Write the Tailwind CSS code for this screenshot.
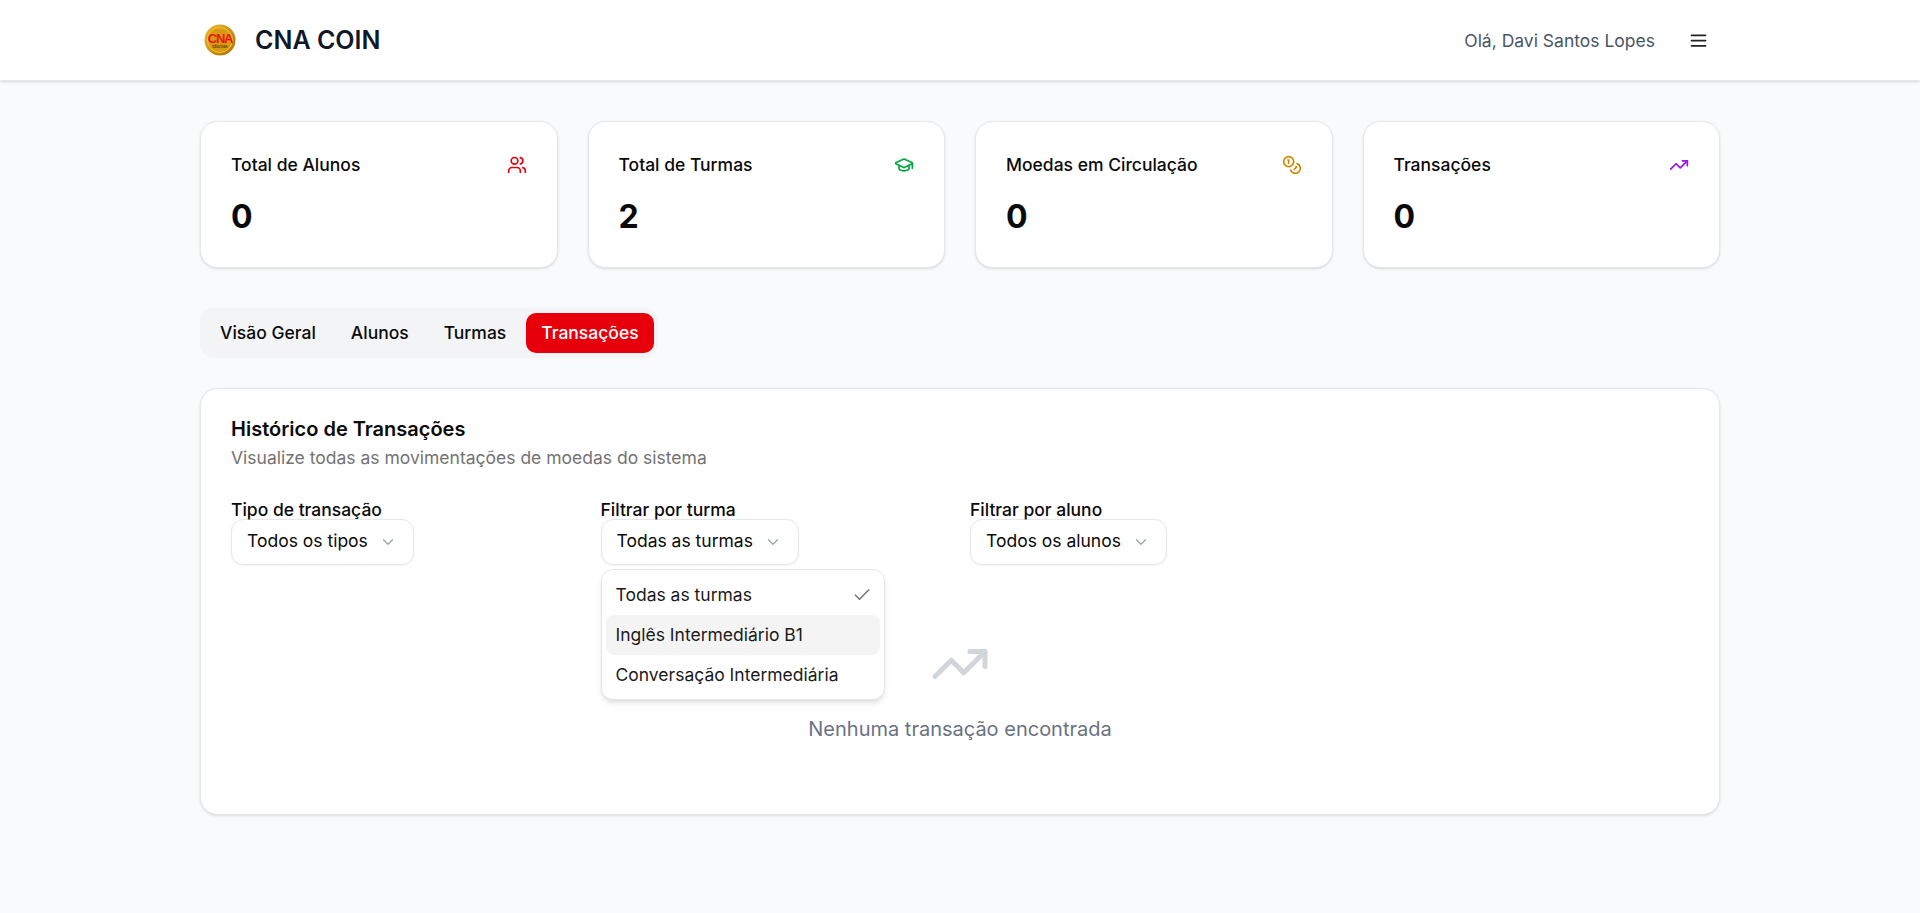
<!DOCTYPE html>
<html lang="pt-BR">
<head>
    <meta charset="UTF-8">
    <meta name="viewport" content="width=device-width, initial-scale=1.0">
    <title>CNA COIN</title>
    <script src="https://cdn.jsdelivr.net/npm/@tailwindcss/browser@4"></script>
</head>
<body class="bg-[#f9fafb] font-['Inter',sans-serif] text-[#0a0a0a] min-h-[913px]">
    <!-- Header -->
    <header class="bg-white h-[81px] border-b border-gray-200 shadow-sm">
        <div class="w-[1520px] mx-auto h-full flex items-center justify-between pl-1 pr-[11px]">
            <div class="flex items-center gap-[19px]">
                <svg class="w-8 h-8" viewBox="0 0 32 32">
                    <defs>
                        <linearGradient id="gold" x1="0" y1="0" x2="1" y2="1">
                            <stop offset="0" stop-color="#f0bd28"/>
                            <stop offset="1" stop-color="#a86c06"/>
                        </linearGradient>
                    </defs>
                    <circle cx="16" cy="16" r="15.5" fill="url(#gold)"/>
                    <circle cx="16" cy="16" r="12.5" fill="#d99a10" stroke="#f5cf4a" stroke-width="0.8"/>
                    <text x="16" y="19" text-anchor="middle" font-family="Liberation Sans" font-size="13" font-weight="700" letter-spacing="-1.2" fill="#e8141c">CNA</text>
                    <text x="16" y="24" text-anchor="middle" font-family="Liberation Sans" font-size="4.5" fill="#3a2a08">idiomas</text>
                </svg>
                <span class="text-[25px] font-semibold text-gray-900 pt-0.5">CNA COIN</span>
            </div>
            <div class="flex items-center gap-[33px]">
                <span class="text-[17.5px] text-gray-600 pt-0.5">Olá, Davi Santos Lopes</span>
                <svg class="w-[21px] h-[21px] text-[#222222]" viewBox="0 0 24 24" fill="none" stroke="currentColor" stroke-width="2" stroke-linecap="round" stroke-linejoin="round">
                    <path d="M4 6h16"/><path d="M4 12h16"/><path d="M4 18h16"/>
                </svg>
            </div>
        </div>
    </header>

    <main class="w-[1520px] mx-auto pt-10">
        <!-- Stats -->
        <div class="grid grid-cols-4 gap-[30px]">
            <div class="h-[147px] bg-white rounded-[17.5px] border border-gray-200 shadow-sm px-[30px] pt-[31px]">
                <div class="flex items-center justify-between h-6">
                    <span class="text-[17.5px] font-medium">Total de Alunos</span>
                    <svg class="w-5 h-5 text-[#e7000b]" viewBox="0 0 24 24" fill="none" stroke="currentColor" stroke-width="2" stroke-linecap="round" stroke-linejoin="round">
                        <path d="M16 21v-2a4 4 0 0 0-4-4H6a4 4 0 0 0-4 4v2"/><circle cx="9" cy="7" r="4"/><path d="M22 21v-2a4 4 0 0 0-3-3.87"/><path d="M16 3.13a4 4 0 0 1 0 7.75"/>
                    </svg>
                </div>
                <div class="text-[32px] leading-9 font-bold mt-[22px]">0</div>
            </div>
            <div class="h-[147px] bg-white rounded-[17.5px] border border-gray-200 shadow-sm px-[30px] pt-[31px]">
                <div class="flex items-center justify-between h-6">
                    <span class="text-[17.5px] font-medium">Total de Turmas</span>
                    <svg class="w-5 h-5 text-[#00a63e]" viewBox="0 0 24 24" fill="none" stroke="currentColor" stroke-width="2" stroke-linecap="round" stroke-linejoin="round">
                        <path d="M21.42 10.922a1 1 0 0 0-.019-1.838L12.83 5.18a2 2 0 0 0-1.66 0L2.6 9.08a1 1 0 0 0 0 1.832l8.57 3.908a2 2 0 0 0 1.66 0z"/><path d="M22 10v6"/><path d="M6 12.5V16a6 3 0 0 0 12 0v-3.5"/>
                    </svg>
                </div>
                <div class="text-[32px] leading-9 font-bold mt-[22px]">2</div>
            </div>
            <div class="h-[147px] bg-white rounded-[17.5px] border border-gray-200 shadow-sm px-[30px] pt-[31px]">
                <div class="flex items-center justify-between h-6">
                    <span class="text-[17.5px] font-medium">Moedas em Circulação</span>
                    <svg class="w-5 h-5 text-[#d08700]" viewBox="0 0 24 24" fill="none" stroke="currentColor" stroke-width="2" stroke-linecap="round" stroke-linejoin="round">
                        <circle cx="8" cy="8" r="6"/><path d="M18.09 10.37A6 6 0 1 1 10.34 18"/><path d="M7 6h1v4"/><path d="m16.71 13.88.7.71-2.82 2.82"/>
                    </svg>
                </div>
                <div class="text-[32px] leading-9 font-bold mt-[22px]">0</div>
            </div>
            <div class="h-[147px] bg-white rounded-[17.5px] border border-gray-200 shadow-sm px-[30px] pt-[31px]">
                <div class="flex items-center justify-between h-6">
                    <span class="text-[17.5px] font-medium">Transações</span>
                    <svg class="w-5 h-5 text-[#9810fa]" viewBox="0 0 24 24" fill="none" stroke="currentColor" stroke-width="2" stroke-linecap="round" stroke-linejoin="round">
                        <polyline points="22 7 13.5 15.5 8.5 10.5 2 17"/><polyline points="16 7 22 7 22 13"/>
                    </svg>
                </div>
                <div class="text-[32px] leading-9 font-bold mt-[22px]">0</div>
            </div>
        </div>

        <!-- Tabs -->
        <div class="mt-10 w-fit h-[50px] flex items-center gap-[5px] bg-[#f3f4f6] rounded-[14px] p-[5px] pr-1">
            <button class="h-10 px-[15px] rounded-[10px] text-[17.5px] font-medium">Visão Geral</button>
            <button class="h-10 px-[15px] rounded-[10px] text-[17.5px] font-medium">Alunos</button>
            <button class="h-10 px-[15px] rounded-[10px] text-[17.5px] font-medium">Turmas</button>
            <button class="h-10 px-[15px] rounded-[10px] text-[17.5px] font-medium bg-[#e7000b] text-white">Transações</button>
        </div>

        <!-- Transactions -->
        <section class="mt-[30px] h-[427px] bg-white rounded-[17.5px] border border-gray-200 shadow-sm px-[30px] pt-[30px]">
            <h2 class="text-xl leading-[20px] font-semibold">Histórico de Transações</h2>
            <p class="text-[17.5px] leading-6 text-[#737373] mt-[7px]">Visualize todas as movimentações de moedas do sistema</p>

            <div class="grid grid-cols-4 gap-5 mt-[31px]">
                <div>
                    <label class="block text-[17.5px] leading-[17.5px] font-medium">Tipo de transação</label>
                    <button class="h-[46px] w-fit pl-[15px] pr-4 flex items-center gap-[11px] bg-white rounded-xl border border-gray-200 shadow-xs text-[17.5px]">
                        Todos os tipos
                        <svg class="w-[18px] h-[18px] text-gray-400" viewBox="0 0 24 24" fill="none" stroke="currentColor" stroke-width="1.6" stroke-linecap="round" stroke-linejoin="round"><path d="m6 9 6 6 6-6"/></svg>
                    </button>
                </div>
                <div class="relative">
                    <label class="block text-[17.5px] leading-[17.5px] font-medium">Filtrar por turma</label>
                    <button class="h-[46px] w-fit pl-[15px] pr-4 flex items-center gap-[11px] bg-white rounded-xl border border-gray-200 shadow-xs text-[17.5px]">
                        Todas as turmas
                        <svg class="w-[18px] h-[18px] text-gray-400" viewBox="0 0 24 24" fill="none" stroke="currentColor" stroke-width="1.6" stroke-linecap="round" stroke-linejoin="round"><path d="m6 9 6 6 6-6"/></svg>
                    </button>
                    <!-- Open dropdown -->
                    <div class="absolute z-10 left-0 top-[68px] w-[284px] bg-white rounded-xl border border-gray-200 shadow-md pt-[5px] pb-1 px-1">
                        <div class="h-10 pl-[10px] pr-2 flex items-center justify-between rounded-lg text-[17.5px] text-[#1a1a1a]">
                            Todas as turmas
                            <svg class="w-5 h-5 text-gray-500" viewBox="0 0 24 24" fill="none" stroke="currentColor" stroke-width="1.8" stroke-linecap="round" stroke-linejoin="round"><path d="M20 6 9 17l-5-5"/></svg>
                        </div>
                        <div class="h-10 pl-[10px] pr-2 flex items-center rounded-lg text-[17.5px] text-[#1a1a1a] bg-[#f4f4f5]">Inglês Intermediário B1</div>
                        <div class="h-10 pl-[10px] pr-2 flex items-center rounded-lg text-[17.5px] text-[#1a1a1a]">Conversação Intermediária</div>
                    </div>
                </div>
                <div>
                    <label class="block text-[17.5px] leading-[17.5px] font-medium">Filtrar por aluno</label>
                    <button class="h-[46px] w-fit pl-[15px] pr-4 flex items-center gap-[11px] bg-white rounded-xl border border-gray-200 shadow-xs text-[17.5px]">
                        Todos os alunos
                        <svg class="w-[18px] h-[18px] text-gray-400" viewBox="0 0 24 24" fill="none" stroke="currentColor" stroke-width="1.6" stroke-linecap="round" stroke-linejoin="round"><path d="m6 9 6 6 6-6"/></svg>
                    </button>
                </div>
            </div>

            <!-- Empty state -->
            <div class="flex flex-col items-center mt-[69px]">
                <svg class="w-[60px] h-[60px] text-gray-300" viewBox="0 0 24 24" fill="none" stroke="currentColor" stroke-width="2" stroke-linecap="round" stroke-linejoin="round">
                    <polyline points="22 7 13.5 15.5 8.5 10.5 2 17"/><polyline points="16 7 22 7 22 13"/>
                </svg>
                <p class="mt-[21px] text-xl text-gray-500">Nenhuma transação encontrada</p>
            </div>
        </section>
    </main>
</body>
</html>
